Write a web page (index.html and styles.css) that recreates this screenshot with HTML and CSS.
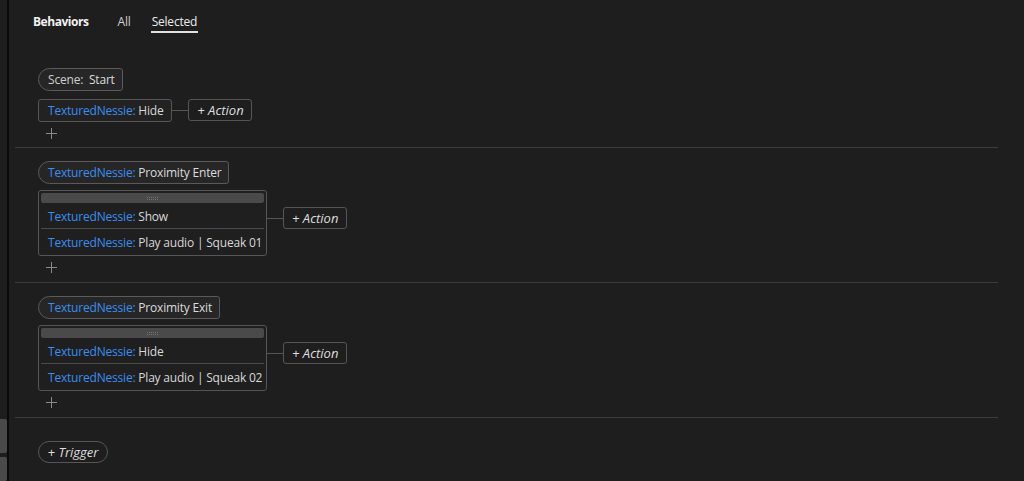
FILE: index.html
```html
<!DOCTYPE html>
<html>
<head>
<meta charset="utf-8">
<link rel="stylesheet" href="styles.css">
</head>
<body>
<div class="app">
  <div class="rail">
    <div class="rail-tab rail-tab-a"></div>
    <div class="rail-tab rail-tab-b"></div>
  </div>
  <div class="main">
    <div class="tabs">
      <span class="tabs-title">Behaviors</span>
      <span class="tab">All</span>
      <span class="tab tab-active">Selected</span>
    </div>
    <div class="sections">
      <div class="section section-first">
        <div class="trigger"><span class="label">Scene:</span>  Start</div>
        <div class="action-row action-row-single">
          <div class="chip"><span class="obj">TexturedNessie:</span> Hide</div>
          <div class="add-wrap">
            <div class="connector"></div>
            <div class="add-action">+ Action</div>
          </div>
        </div>
        <div class="plus-row plus-row-first"><svg class="plus" width="11" height="11" viewBox="0 0 11 11"><path d="M5.5 0V11M0 5.5H11" stroke="#8a8a8a" stroke-width="1"/></svg></div>
      </div>
      <div class="section">
        <div class="trigger"><span class="obj">TexturedNessie:</span> Proximity Enter</div>
        <div class="action-row">
          <div class="group">
            <div class="grip"><svg class="dots" width="11" height="3" viewBox="0 0 11 3"><g fill="#747474"><rect x="0" y="0" width="1" height="1"/><rect x="2" y="0" width="1" height="1"/><rect x="4" y="0" width="1" height="1"/><rect x="6" y="0" width="1" height="1"/><rect x="8" y="0" width="1" height="1"/><rect x="10" y="0" width="1" height="1"/><rect x="0" y="2" width="1" height="1"/><rect x="2" y="2" width="1" height="1"/><rect x="4" y="2" width="1" height="1"/><rect x="6" y="2" width="1" height="1"/><rect x="8" y="2" width="1" height="1"/><rect x="10" y="2" width="1" height="1"/></g></svg></div>
            <div class="group-item"><span class="obj">TexturedNessie:</span> Show</div>
            <div class="group-item"><span class="obj">TexturedNessie:</span> Play audio | Squeak 01</div>
          </div>
          <div class="add-wrap add-wrap-group">
            <div class="connector"></div>
            <div class="add-action">+ Action</div>
          </div>
        </div>
        <div class="plus-row"><svg class="plus" width="11" height="11" viewBox="0 0 11 11"><path d="M5.5 0V11M0 5.5H11" stroke="#8a8a8a" stroke-width="1"/></svg></div>
      </div>
      <div class="section">
        <div class="trigger"><span class="obj">TexturedNessie:</span> Proximity Exit</div>
        <div class="action-row">
          <div class="group">
            <div class="grip"><svg class="dots" width="11" height="3" viewBox="0 0 11 3"><g fill="#747474"><rect x="0" y="0" width="1" height="1"/><rect x="2" y="0" width="1" height="1"/><rect x="4" y="0" width="1" height="1"/><rect x="6" y="0" width="1" height="1"/><rect x="8" y="0" width="1" height="1"/><rect x="10" y="0" width="1" height="1"/><rect x="0" y="2" width="1" height="1"/><rect x="2" y="2" width="1" height="1"/><rect x="4" y="2" width="1" height="1"/><rect x="6" y="2" width="1" height="1"/><rect x="8" y="2" width="1" height="1"/><rect x="10" y="2" width="1" height="1"/></g></svg></div>
            <div class="group-item"><span class="obj">TexturedNessie:</span> Hide</div>
            <div class="group-item"><span class="obj">TexturedNessie:</span> Play audio | Squeak 02</div>
          </div>
          <div class="add-wrap add-wrap-group">
            <div class="connector"></div>
            <div class="add-action">+ Action</div>
          </div>
        </div>
        <div class="plus-row"><svg class="plus" width="11" height="11" viewBox="0 0 11 11"><path d="M5.5 0V11M0 5.5H11" stroke="#8a8a8a" stroke-width="1"/></svg></div>
      </div>
      <div class="section-last">
        <div class="add-trigger">+ Trigger</div>
      </div>
    </div>
  </div>
</div>
</body>
</html>
```
FILE: styles.css
```css
* { box-sizing: border-box; }
html, body {
  margin: 0;
  padding: 0;
  background: #1e1e1e;
  width: 1024px;
  height: 481px;
  overflow: hidden;
}
body {
  font-family: "Open Sans", "Noto Sans", sans-serif;
  font-size: 12px;
  letter-spacing: -0.2px;
  color: #d8d8d8;
}
.app {
  display: flex;
  height: 481px;
}
.rail {
  flex: none;
  width: 9px;
  display: flex;
  flex-direction: column;
  justify-content: flex-end;
  gap: 4px;
  border-right: 2px solid #0a0a0a;
}
.rail-tab {
  width: 7px;
  background: #4a4a4a;
  border-radius: 0 2px 2px 0;
}
.rail-tab-a { height: 34px; }
.rail-tab-b { height: 24px; }
.main {
  flex: 1;
  display: flex;
  flex-direction: column;
}
.tabs {
  display: flex;
  align-items: baseline;
  height: 55px;
  padding: 13px 0 0 24px;
}
.tabs-title {
  font-weight: 700;
  color: #f2f2f2;
  letter-spacing: -0.45px;
  margin-right: 29px;
}
.tab {
  color: #cfcfcf;
  margin-right: 21px;
  padding-bottom: 1px;
}
.tab-active {
  color: #ececec;
  border-bottom: 2px solid #e0e0e0;
  padding: 0 1px 1px;
  margin-left: -1px;
}
.sections {
  width: 983px;
  margin-left: 6px;
}
.section {
  border-bottom: 1px solid #3c3c3c;
  padding: 13px 0 0 23px;
}
.trigger {
  display: inline-flex;
  align-items: center;
  height: 23px;
  padding: 0 7px 0 9px;
  border: 1px solid #5a5a5a;
  border-radius: 12px 3px 3px 12px;
  background: #262626;
  color: #dcdcdc;
  white-space: pre;
}
.obj { color: #3a8ef0; }
.label { color: #cfcfcf; }
.action-row {
  display: flex;
  align-items: flex-start;
  margin-top: 6px;
}
.action-row-single { margin-top: 8px; }
.chip {
  height: 23px;
  display: flex;
  align-items: center;
  padding: 0 8px 0 9px;
  border: 1px solid #555;
  border-radius: 3px;
  background: #222;
  white-space: pre;
}
.add-wrap {
  display: flex;
  align-items: center;
}
.add-wrap-group { margin-top: 17px; }
.connector {
  width: 16px;
  height: 1px;
  background: #555;
}
.add-action {
  height: 22px;
  width: 64px;
  display: flex;
  align-items: center;
  justify-content: center;
  border: 1px solid #555;
  border-radius: 3px;
  font-style: italic;
  font-size: 13px;
  letter-spacing: 0;
  color: #dedede;
}
.group {
  border: 1px solid #555;
  border-radius: 3px;
  padding: 2px 2px 0 2px;
  background: #1f1f1f;
}
.grip {
  height: 10px;
  background: #4a4a4a;
  border-radius: 2px;
  display: flex;
  align-items: center;
  justify-content: center;
}
.dots { display: block; }
.group-item {
  height: 25px;
  display: flex;
  align-items: center;
  padding: 1px 2px 0 7px;
  white-space: pre;
}
.group-item + .group-item {
  height: 27px;
  border-top: 1px solid #4a4a4a;
}
.plus-row {
  height: 26px;
  padding: 6px 0 0 8px;
}
.plus-row-first { height: 25px; }
.plus { display: block; }
.section-last {
  padding: 23px 0 0 23px;
}
.add-trigger {
  display: inline-flex;
  align-items: center;
  justify-content: center;
  height: 22px;
  width: 70px;
  border: 1px solid #555;
  border-radius: 11px;
  font-style: italic;
  font-size: 13px;
  letter-spacing: 0;
  color: #dedede;
}
```
